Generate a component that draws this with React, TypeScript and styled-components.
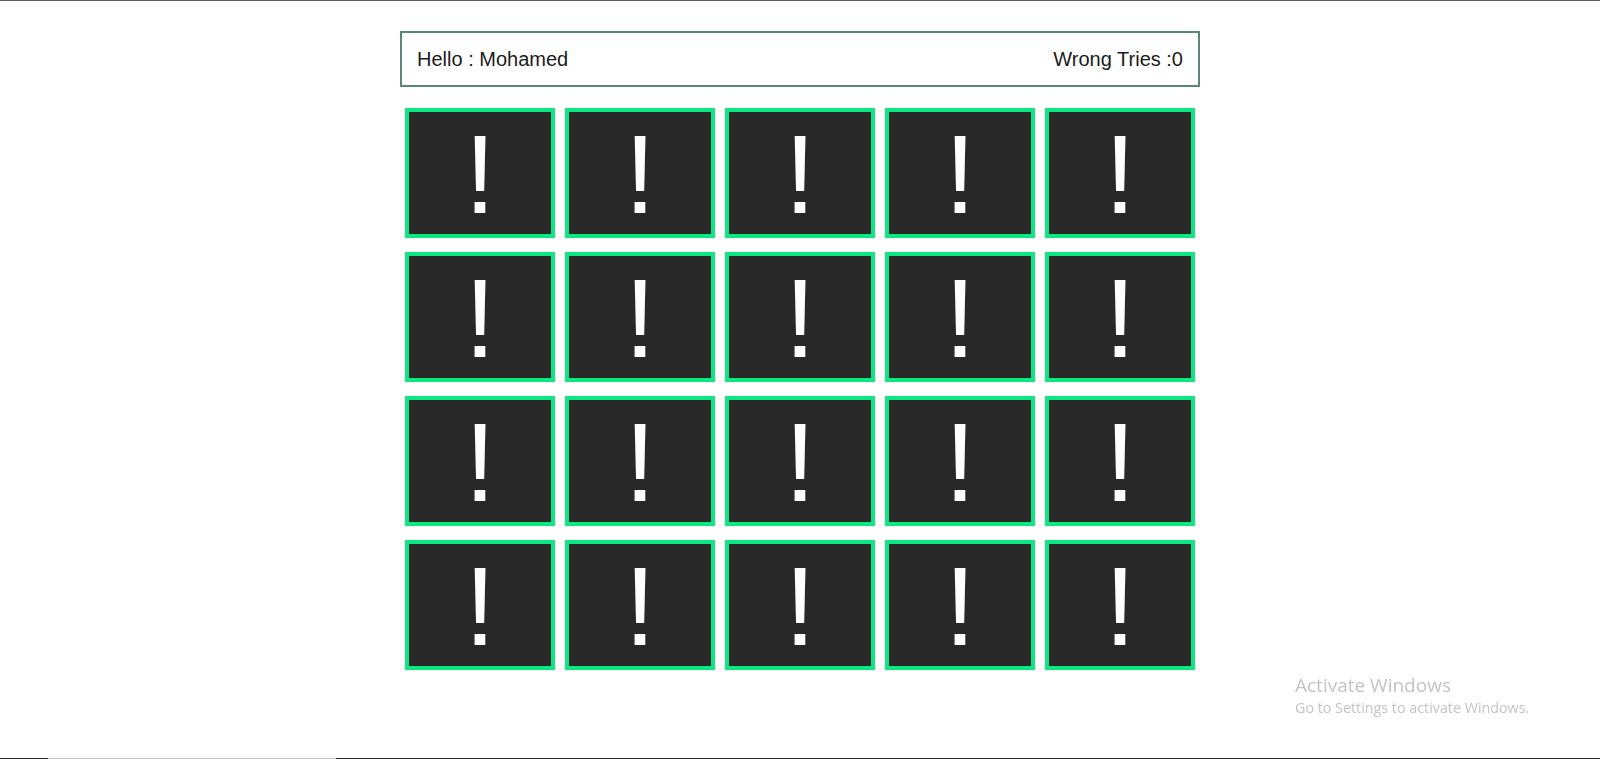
import React from "react";
import styled, { createGlobalStyle } from "styled-components";

const GlobalStyle = createGlobalStyle`
  html {
    border-top: 1px solid #5f5f5f;
    background: #ffffff;
  }
  body {
    margin: 0;
    font-family: "Liberation Sans", Arial, sans-serif;
    background: #ffffff;
  }
`;

const Page = styled.div`
  width: 800px;
  margin: 30px auto 0;
`;

const InfoBar = styled.div`
  box-sizing: border-box;
  height: 56px;
  border: 2px solid #588773;
  padding: 0 15px;
  display: flex;
  justify-content: space-between;
  align-items: center;
  font-size: 20px;
  color: #1b1b1b;
`;

const Board = styled.div`
  margin-top: 21px;
  padding: 0 5px;
  display: grid;
  grid-template-columns: repeat(5, 150px);
  column-gap: 10px;
  row-gap: 14px;
`;

const Tile = styled.div`
  box-sizing: border-box;
  height: 130px;
  border: 4px solid #0be881;
  background: #282828;
  color: #ffffff;
  display: flex;
  align-items: center;
  justify-content: center;
  font-family: "Liberation Sans", Arial, sans-serif;
  font-size: 112px;
  line-height: 1;
  padding-top: 3px;
`;

const Watermark = styled.div`
  position: fixed;
  left: 1295px;
  top: 674px;
  color: #c4c4c4;
  font-family: "Open Sans", "Noto Sans", sans-serif;
  pointer-events: none;
`;

const WatermarkTitle = styled.div`
  font-size: 19px;
  line-height: 23px;
`;

const WatermarkSub = styled.div`
  font-size: 14.3px;
  line-height: 21px;
`;

const TaskbarEdge = styled.div`
  position: fixed;
  left: 0;
  right: 0;
  bottom: 0;
  height: 1px;
  background: linear-gradient(
    to right,
    #2b2b2b 0,
    #2b2b2b 48px,
    #c3c3c3 48px,
    #c3c3c3 336px,
    #2b2b2b 336px,
    #2b2b2b 100%
  );
`;

export default function App() {
  const tiles = Array.from({ length: 20 }, (_, i) => i);
  return (
    <>
      <GlobalStyle />
      <Page>
        <InfoBar>
          <span>Hello : Mohamed</span>
          <span>Wrong Tries :0</span>
        </InfoBar>
        <Board>
          {tiles.map((i) => (
            <Tile key={i}>!</Tile>
          ))}
        </Board>
      </Page>
      <Watermark>
        <WatermarkTitle>Activate Windows</WatermarkTitle>
        <WatermarkSub>Go to Settings to activate Windows.</WatermarkSub>
      </Watermark>
      <TaskbarEdge />
    </>
  );
}
